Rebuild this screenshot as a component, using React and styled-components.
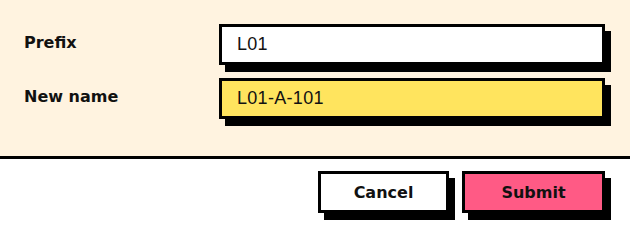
import React from "react";
import styled, { createGlobalStyle } from "styled-components";

const GlobalStyle = createGlobalStyle`
  html, body {
    margin: 0;
    padding: 0;
    background: #ffffff;
  }
  * {
    box-sizing: border-box;
  }
`;

const Dialog = styled.div`
  width: 630px;
  height: 232px;
  background: #ffffff;
  display: flex;
  flex-direction: column;
`;

const FormPanel = styled.div`
  background: #fff3e0;
  border-bottom: 3px solid #000;
  padding: 24px 25px 0 24px;
  height: 159px;
  display: grid;
  grid-template-columns: 195px 1fr;
  grid-auto-rows: 41px;
  row-gap: 13px;
  align-content: start;
`;

const Label = styled.label`
  font-family: "DejaVu Sans", sans-serif;
  font-weight: 700;
  font-size: 16px;
  color: #111;
  display: flex;
  align-items: center;
  padding-bottom: 5px;
`;

const TextInput = styled.input`
  width: 100%;
  height: 41px;
  border: 3px solid #000;
  border-radius: 0;
  box-shadow: 6px 7px 0 #000;
  background: ${(p) => (p.$highlight ? "#ffe45e" : "#ffffff")};
  font-family: "Liberation Sans", Arial, sans-serif;
  font-size: 18px;
  letter-spacing: 0.3px;
  color: #111;
  padding: 0 0 0 15px;
  outline: none;
`;

const Footer = styled.div`
  display: flex;
  justify-content: flex-end;
  gap: 13px;
  padding: 12px 25px 0 0;
`;

const Button = styled.button`
  width: ${(p) => p.$width}px;
  height: 42px;
  border: 3px solid #000;
  border-radius: 0;
  box-shadow: 6px 7px 0 #000;
  background: ${(p) => (p.$primary ? "#ff5a85" : "#ffffff")};
  font-family: "DejaVu Sans", sans-serif;
  font-weight: 700;
  font-size: 16px;
  color: #111;
  cursor: pointer;
  padding: 0;
`;

const App = () => {
  return (
    <>
      <GlobalStyle />
      <Dialog>
        <FormPanel>
          <Label htmlFor="prefix">Prefix</Label>
          <TextInput id="prefix" defaultValue="L01" />
          <Label htmlFor="newname">New name</Label>
          <TextInput id="newname" defaultValue="L01-A-101" $highlight />
        </FormPanel>
        <Footer>
          <Button type="button" $width={131}>
            Cancel
          </Button>
          <Button type="button" $width={143} $primary>
            Submit
          </Button>
        </Footer>
      </Dialog>
    </>
  );
};

export default App;
